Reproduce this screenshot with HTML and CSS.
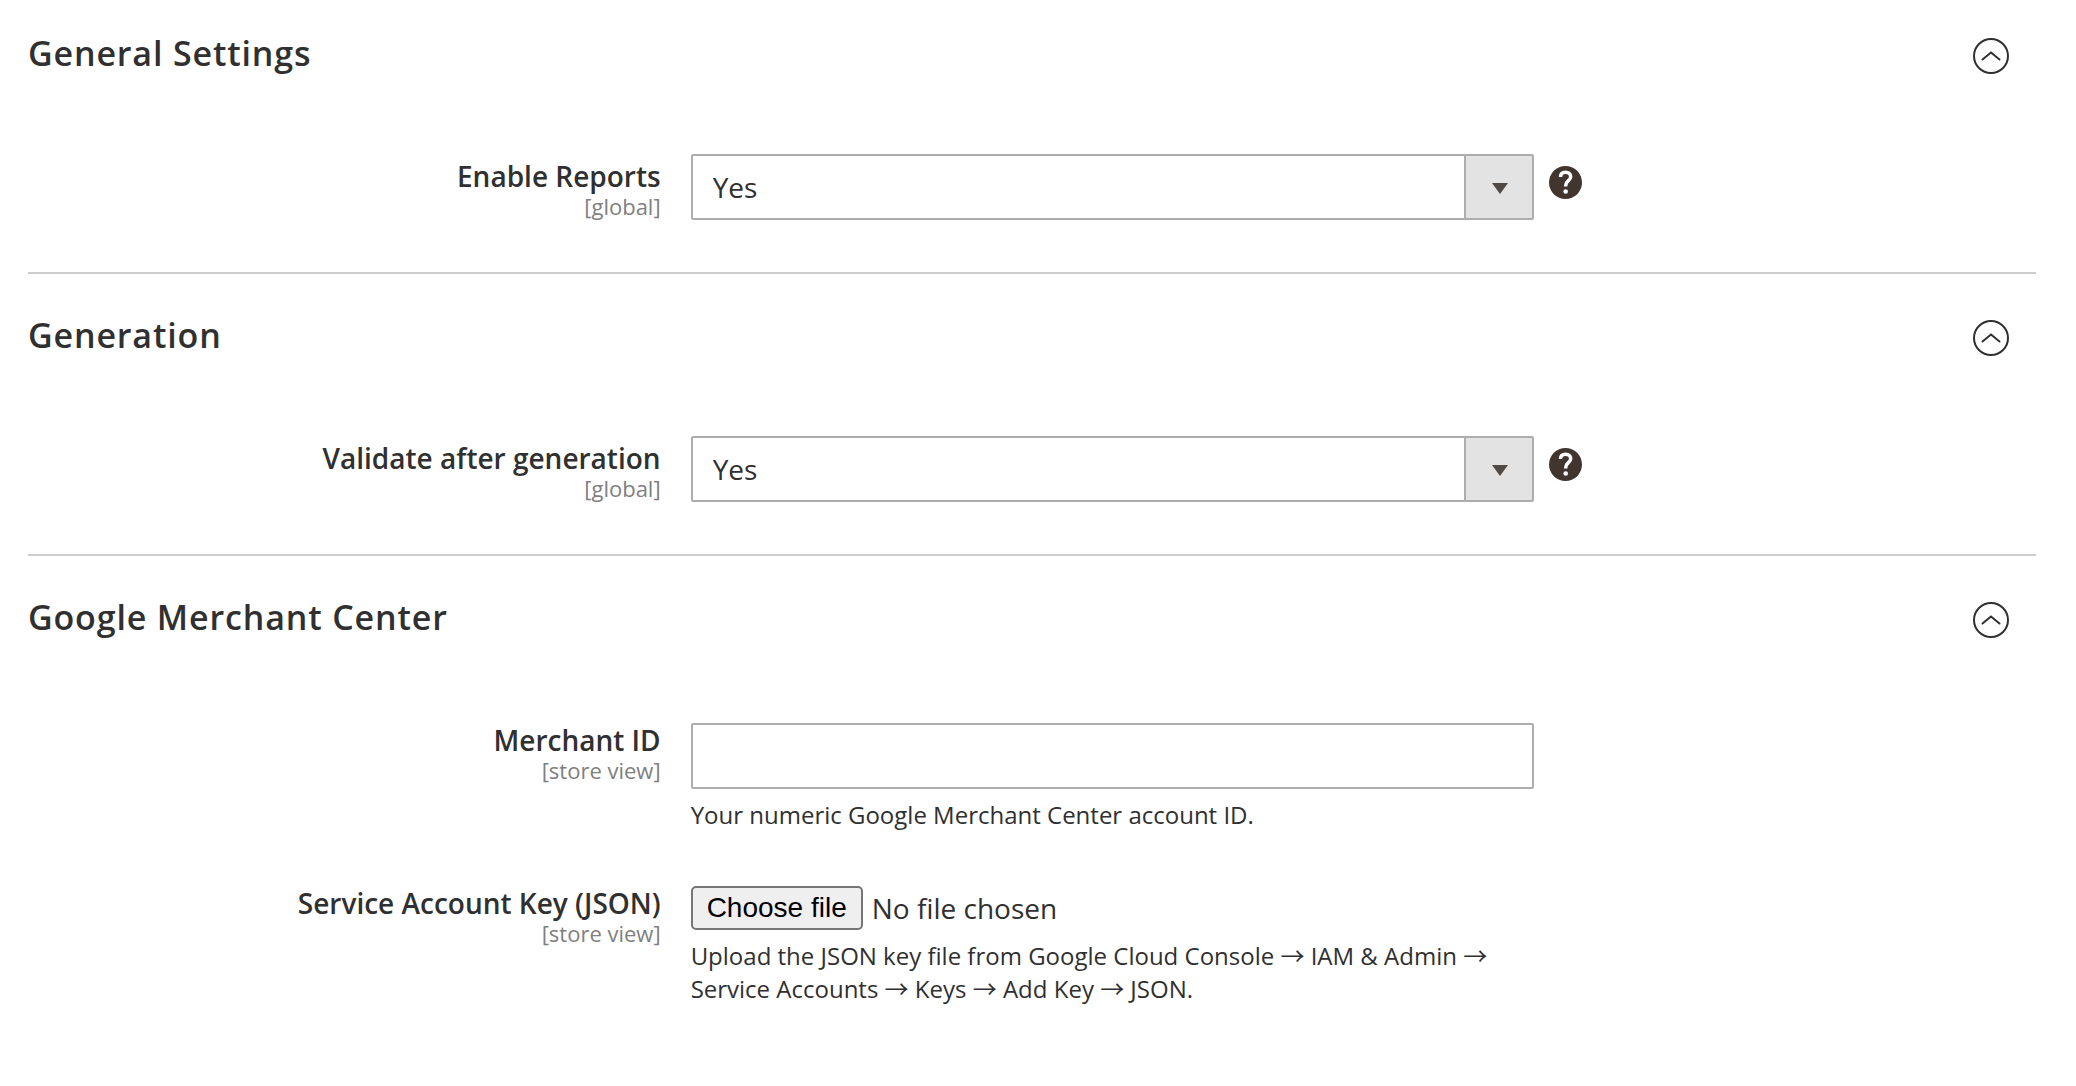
FILE: index.html
```
<!DOCTYPE html>
<html lang="en-GB">
<head>
<meta charset="utf-8">
<meta name="viewport" content="width=device-width, initial-scale=1.0">
<title>Reports Configuration</title>
<link rel="stylesheet" href="styles.css">
</head>
<body>
<form class="config">

  <section class="config-section">
    <header class="section-head">
      <h2>General Settings</h2>
      <button type="button" class="toggle" aria-label="Collapse General Settings">
        <svg viewBox="0 0 36 36"><circle cx="18" cy="18" r="17"/><path d="M9.5 21.5 18 14.5l8.5 7"/></svg>
      </button>
    </header>
    <div class="field">
      <label class="field-label" for="enable_reports">Enable Reports <span class="scope">[global]</span></label>
      <div class="field-value">
        <div class="select-wrap">
          <select id="enable_reports"><option selected>Yes</option><option>No</option></select>
        </div>
      </div>
      <button type="button" class="help" aria-label="Help">
        <svg viewBox="0 0 33 33"><circle cx="16.5" cy="16.5" r="16.5"/><path d="M11.5 11c0-3.2 2-4.8 5-4.8s5.2 1.7 5.2 4.5c0 4-5 4-5 8.8v1"/><circle class="dot" cx="16.7" cy="25.5" r="2.3"/></svg>
      </button>
    </div>
  </section>

  <section class="config-section">
    <header class="section-head">
      <h2>Generation</h2>
      <button type="button" class="toggle" aria-label="Collapse Generation">
        <svg viewBox="0 0 36 36"><circle cx="18" cy="18" r="17"/><path d="M9.5 21.5 18 14.5l8.5 7"/></svg>
      </button>
    </header>
    <div class="field">
      <label class="field-label" for="validate">Validate after generation <span class="scope">[global]</span></label>
      <div class="field-value">
        <div class="select-wrap">
          <select id="validate"><option selected>Yes</option><option>No</option></select>
        </div>
      </div>
      <button type="button" class="help" aria-label="Help">
        <svg viewBox="0 0 33 33"><circle cx="16.5" cy="16.5" r="16.5"/><path d="M11.5 11c0-3.2 2-4.8 5-4.8s5.2 1.7 5.2 4.5c0 4-5 4-5 8.8v1"/><circle class="dot" cx="16.7" cy="25.5" r="2.3"/></svg>
      </button>
    </div>
  </section>

  <section class="config-section">
    <header class="section-head">
      <h2>Google Merchant Center</h2>
      <button type="button" class="toggle" aria-label="Collapse Google Merchant Center">
        <svg viewBox="0 0 36 36"><circle cx="18" cy="18" r="17"/><path d="M9.5 21.5 18 14.5l8.5 7"/></svg>
      </button>
    </header>
    <div class="field">
      <label class="field-label" for="merchant_id">Merchant ID <span class="scope">[store view]</span></label>
      <div class="field-value with-note">
        <input type="text" id="merchant_id">
        <p class="note">Your numeric Google Merchant Center account ID.</p>
      </div>
    </div>
    <div class="field">
      <label class="field-label" for="service_key">Service Account Key (JSON) <span class="scope">[store view]</span></label>
      <div class="field-value with-note">
        <div class="file-picker">
          <input type="file" id="service_key" accept=".json">
          <button type="button" class="file-button" id="choose_file">Choose file</button>
          <span id="file_name">No file chosen</span>
        </div>
        <p class="note">Upload the JSON key file from Google Cloud Console → IAM &amp; Admin → Service Accounts → Keys → Add Key → JSON.</p>
      </div>
    </div>
  </section>

</form>
<script>
  const fileInput = document.getElementById("service_key");
  document.getElementById("choose_file").addEventListener("click", () => fileInput.click());
  fileInput.addEventListener("change", () => {
    document.getElementById("file_name").textContent = fileInput.files.length ? fileInput.files[0].name : "No file chosen";
  });
</script>
</body>
</html>
```
FILE: styles.css
```
* { box-sizing: border-box; }
body {
  margin: 0;
  background: #fff;
  color: #303030;
  font-family: "Open Sans", "Noto Sans CJK JP", sans-serif;
  font-size: 28px;
}
.config {
  padding: 0 40px 0 28px;
}
.config-section {
  padding-bottom: 52px;
  border-bottom: 2px solid #ccc;
}
.config-section:last-child {
  border-bottom: none;
}
.section-head {
  display: flex;
  justify-content: space-between;
  align-items: flex-start;
  padding: 38px 27px 78px 0;
}
.config-section:first-child .section-head {
  padding-top: 30px;
}
h2 {
  margin: 0;
  font-size: 34px;
  font-weight: 600;
  line-height: 46px;
  letter-spacing: .025em;
}
button {
  padding: 0;
  border: none;
  background: none;
  cursor: pointer;
}
.toggle {
  padding-top: 8px;
}
.toggle svg {
  display: block;
  width: 36px;
  height: 36px;
  fill: none;
  stroke: #303030;
  stroke-width: 2;
  stroke-linecap: round;
}
.field {
  display: flex;
  align-items: flex-start;
}
.field + .field {
  margin-top: 50px;
}
.field-label {
  width: 33%;
  padding: 4px 30px 0 0;
  text-align: right;
  font-weight: 600;
  line-height: 36px;
}
.scope {
  display: block;
  color: #808080;
  font-size: 22px;
  font-weight: 400;
  line-height: 24px;
}
.field-value {
  width: 42%;
}
.with-note {
  padding-top: 5px;
}
.select-wrap {
  position: relative;
}
/* arrow box over the right end of the select */
.select-wrap::before {
  content: "";
  position: absolute;
  top: 2px;
  right: 2px;
  bottom: 2px;
  width: 66px;
  background: #e3e3e3;
  border-left: 2px solid #adadad;
  pointer-events: none;
}
.select-wrap::after {
  content: "";
  position: absolute;
  top: 29px;
  right: 26px;
  border: 8px solid transparent;
  border-top: 11px solid #514943;
  border-bottom: none;
  pointer-events: none;
}
select, input[type="text"] {
  display: block;
  width: 100%;
  height: 66px;
  padding: 0 20px;
  border: 2px solid #adadad;
  border-radius: 2px;
  background: #fff;
  color: #303030;
  font: inherit;
  appearance: none;
}
.file-picker {
  position: relative;
  display: flex;
  align-items: center;
  gap: 9px;
  line-height: 44px;
}
.file-picker input {
  position: absolute;
  width: 1px;
  height: 1px;
  opacity: 0;
}
.file-button {
  height: 44px;
  padding: 0 14px;
  border: 2px solid #767676;
  border-radius: 5px;
  background: #efefef;
  color: #000;
  font-family: "Liberation Sans", Arial, sans-serif;
  font-size: 28px;
}
.note {
  margin: 9px 0 0;
  font-size: 24px;
  line-height: 33px;
}
.help {
  margin: 12px 0 0 15px;
}
.help svg {
  display: block;
  width: 33px;
  height: 33px;
  fill: #41362f;
}
.help path {
  fill: none;
  stroke: #fff;
  stroke-width: 3.5;
}
.help .dot {
  fill: #fff;
}
```
